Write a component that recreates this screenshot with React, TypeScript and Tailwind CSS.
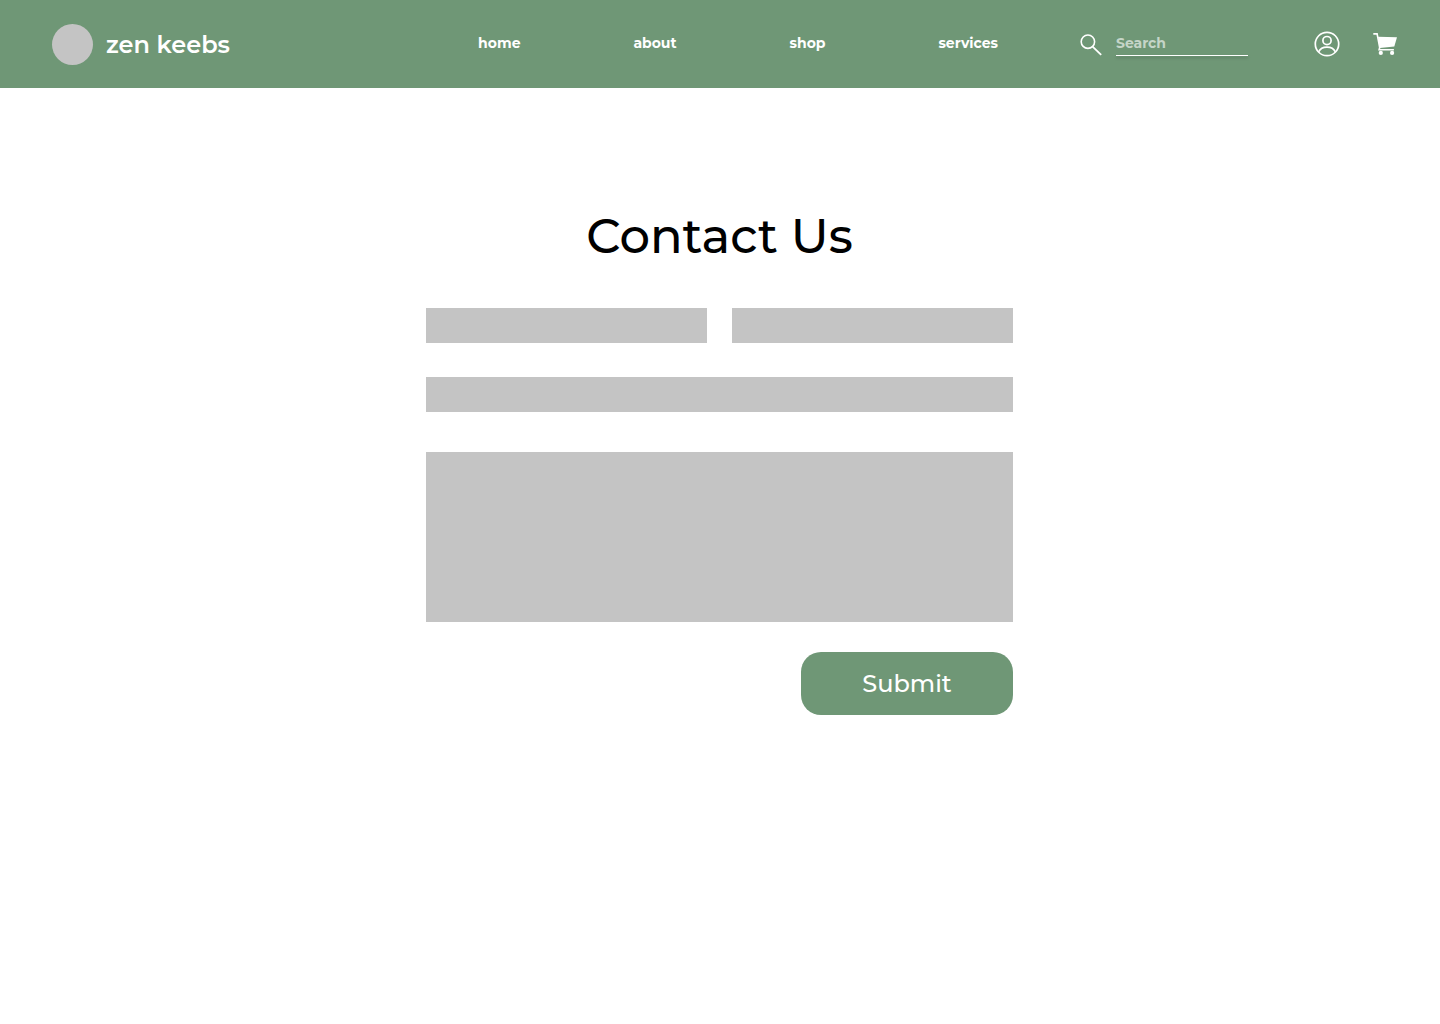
import React from "react";

const links = ["home", "about", "shop", "services"];

function SearchIcon() {
  return (
    <svg width="22" height="22" viewBox="0 0 22 22" fill="none" stroke="currentColor" aria-hidden="true">
      <circle cx="7.9" cy="7.7" r="6.7" strokeWidth="1.6" />
      <path d="M12.6 12.6 21.2 20.8" strokeWidth="1.8" />
    </svg>
  );
}

function UserIcon() {
  return (
    <svg width="26" height="26" viewBox="0 0 26 26" fill="none" stroke="currentColor" strokeWidth="1.7" aria-hidden="true">
      <circle cx="13" cy="13" r="11.7" />
      <circle cx="13" cy="9.6" r="4.1" />
      <path d="M4.6 21c1.4-3.1 4.6-4.9 8.4-4.9s7 1.8 8.4 4.9" />
    </svg>
  );
}

function CartIcon() {
  return (
    <svg width="24" height="22" viewBox="0 0 24 22" fill="currentColor" aria-hidden="true">
      <path d="M.3.9h3.8l2.6 13.6-.6 2.3h14.8" fill="none" stroke="currentColor" strokeWidth="1.6" />
      <path d="M5 3.7 24 4.3 21.3 13.6 6.8 14.9z" />
      <circle cx="7.8" cy="19.9" r="2.1" />
      <circle cx="19.1" cy="19.9" r="2.1" />
    </svg>
  );
}

export default function App() {
  return (
    <div className="min-h-screen bg-white font-['Montserrat','Inter',sans-serif] text-black">
      <header className="flex h-[88px] items-center bg-[#6f9776] pr-[43px] pl-[52px] text-white">
        <a href="#" className="flex items-center gap-[13px] pt-px">
          <span className="size-[41px] rounded-full bg-[#c4c4c4]" />
          <span className="text-2xl leading-8 font-semibold whitespace-nowrap">zen keebs</span>
        </a>
        <nav className="ml-auto flex w-[520px] justify-between pb-0.5 text-sm leading-5 font-bold">
          {links.map((link) => (
            <a key={link} href="#">{link}</a>
          ))}
        </nav>
        <form role="search" className="ml-[82px] flex items-center gap-[14px]">
          <button type="submit" aria-label="Submit search" className="pt-px">
            <SearchIcon />
          </button>
          <div className="w-[132px]">
            <input
              type="search"
              aria-label="Search"
              placeholder="Search"
              className="block h-[23px] w-full bg-transparent pb-0.5 text-sm font-bold outline-none placeholder:text-[#c5d5c8]"
            />
            <div className="h-px bg-white shadow-[0_2px_3px_rgba(0,0,0,0.25)]" />
          </div>
        </form>
        <a href="#" aria-label="Account" className="ml-[66px]">
          <UserIcon />
        </a>
        <a href="#" aria-label="Cart" className="ml-[33px]">
          <CartIcon />
        </a>
      </header>
      <main className="mx-auto max-w-[588px] pt-[118px] pr-px">
        <h1 className="text-center text-5xl leading-[60px] font-medium">Contact Us</h1>
        <form className="mt-[42px] flex flex-col">
          <div className="grid grid-cols-2 gap-[25px]">
            <input aria-label="First name" className="h-[35px] w-full min-w-0 bg-[#c4c4c4] px-3" />
            <input aria-label="Last name" className="h-[35px] w-full min-w-0 bg-[#c4c4c4] px-3" />
          </div>
          <input type="email" aria-label="Email" className="mt-[34px] h-[35px] bg-[#c4c4c4] px-3" />
          <textarea aria-label="Message" className="mt-10 h-[170px] resize-none bg-[#c4c4c4] p-3" />
          <button type="submit" className="mt-[30px] h-[63px] w-[212px] self-end rounded-[20px] bg-[#6f9776] text-2xl leading-8 font-medium text-white">
            Submit
          </button>
        </form>
      </main>
    </div>
  );
}
